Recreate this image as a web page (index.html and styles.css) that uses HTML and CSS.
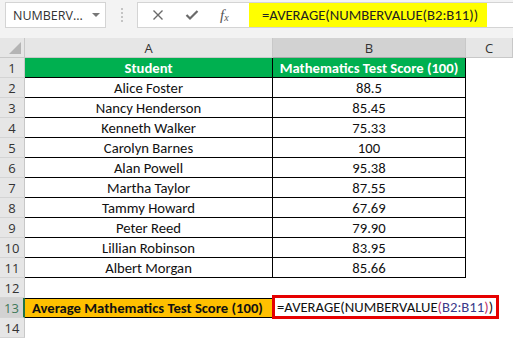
FILE: index.html
```html
<!DOCTYPE html>
<html lang="en">
<head>
  <meta charset="UTF-8">
  <title>NUMBERVALUE average</title>
  <link rel="stylesheet" href="styles.css">
</head>
<body>
  <div class="toolbar">
    <div class="namebox">NUMBERV...<span class="caret"></span></div>
    <div class="grip">
      <svg width="4" height="16" viewBox="0 0 4 16"><circle cx="2" cy="2" r="1" fill="#b5b5b5"/><circle cx="2" cy="6" r="1" fill="#b5b5b5"/><circle cx="2" cy="10" r="1" fill="#b5b5b5"/><circle cx="2" cy="14" r="1" fill="#b5b5b5"/></svg>
    </div>
    <div class="fxbtns">
      <svg width="12" height="12" viewBox="0 0 12 12"><path d="M1.5 1.5 L10.5 10.5 M10.5 1.5 L1.5 10.5" stroke="#6a6a6a" stroke-width="1.4" fill="none"/></svg>
      <svg width="14" height="12" viewBox="0 0 14 12"><path d="M1.5 6 L5 9.5 L12.5 2" stroke="#6a6a6a" stroke-width="2.2" fill="none"/></svg>
      <span class="fx">f<sub>x</sub></span>
    </div>
    <div class="formula"><span class="hl">=AVERAGE(NUMBERVALUE(B2:B11))</span></div>
  </div>

  <div class="sheet">
    <div class="corner"><span class="tri"></span></div>
    <div class="colhead">A</div>
    <div class="colhead sel">B</div>
    <div class="colhead">C</div>

    <div class="rowhead">1</div>
    <div class="cell head">Student</div>
    <div class="cell head right">Mathematics Test Score (100)</div>
    <div class="cell blank"></div>

    <div class="rowhead">2</div>
    <div class="cell">Alice Foster</div>
    <div class="cell right">88.5</div>
    <div class="cell blank"></div>

    <div class="rowhead">3</div>
    <div class="cell">Nancy Henderson</div>
    <div class="cell right">85.45</div>
    <div class="cell blank"></div>

    <div class="rowhead">4</div>
    <div class="cell">Kenneth Walker</div>
    <div class="cell right">75.33</div>
    <div class="cell blank"></div>

    <div class="rowhead">5</div>
    <div class="cell">Carolyn Barnes</div>
    <div class="cell right">100</div>
    <div class="cell blank"></div>

    <div class="rowhead">6</div>
    <div class="cell">Alan Powell</div>
    <div class="cell right">95.38</div>
    <div class="cell blank"></div>

    <div class="rowhead">7</div>
    <div class="cell">Martha Taylor</div>
    <div class="cell right">87.55</div>
    <div class="cell blank"></div>

    <div class="rowhead">8</div>
    <div class="cell">Tammy Howard</div>
    <div class="cell right">67.69</div>
    <div class="cell blank"></div>

    <div class="rowhead">9</div>
    <div class="cell">Peter Reed</div>
    <div class="cell right">79.90</div>
    <div class="cell blank"></div>

    <div class="rowhead">10</div>
    <div class="cell">Lillian Robinson</div>
    <div class="cell right">83.95</div>
    <div class="cell blank"></div>

    <div class="rowhead">11</div>
    <div class="cell">Albert Morgan</div>
    <div class="cell right">85.66</div>
    <div class="cell blank"></div>

    <div class="rowhead">12</div>
    <div class="blank"></div>
    <div class="blank"></div>
    <div class="blank"></div>

    <div class="rowhead sel">13</div>
    <div class="avg">Average Mathematics Test Score (100)</div>
    <div class="edit"><span class="editbox">=AVERAGE(NUMBERVALUE<span class="p1">(</span><span class="ref">B2:B11</span><span class="p1">)</span>)</span></div>
    <div class="blank"></div>

    <div class="rowhead">14</div>
    <div class="blank"></div>
    <div class="blank"></div>
    <div class="blank"></div>
  </div>
</body>
</html>
```

FILE: styles.css
```css
body {
  margin: 0;
  width: 513px;
  height: 338px;
  overflow: hidden;
  background: #fff;
  font-family: Carlito, Lato, sans-serif;
  color: #111;
}

/* formula bar */
.toolbar {
  height: 38px;
  box-sizing: border-box;
  padding-top: 2px;
  background: #f3f3f3;
  display: flex;
  align-items: flex-start;
}
.namebox {
  margin-left: 5px;
  width: 101px;
  height: 26px;
  box-sizing: border-box;
  background: #fff;
  border: 1px solid #d4d4d4;
  display: flex;
  align-items: center;
  padding-left: 7px;
  font-family: "Open Sans", sans-serif;
  font-size: 12.5px;
  color: #333;
}
.caret {
  margin-left: 9px;
  width: 0;
  height: 0;
  border-left: 4px solid transparent;
  border-right: 4px solid transparent;
  border-top: 4px solid #777;
}
.grip {
  width: 31px;
  height: 26px;
  display: flex;
  align-items: center;
  justify-content: center;
}
.fxbtns {
  width: 112px;
  height: 26px;
  box-sizing: border-box;
  background: #fff;
  border: 1px solid #d4d4d4;
  border-right: none;
  display: flex;
  align-items: center;
  justify-content: space-around;
  padding: 0 10px 0 4px;
}
.fx {
  font-family: "Liberation Serif", serif;
  font-style: italic;
  font-size: 15px;
  color: #555;
}
.fx sub {
  font-size: 10px;
  vertical-align: -1px;
}
.formula {
  flex: 1;
  height: 26px;
  box-sizing: border-box;
  background: #fff;
  border-top: 1px solid #d4d4d4;
  border-bottom: 1px solid #d4d4d4;
  display: flex;
}
.hl {
  background: #ffff00;
  width: 238px;
  box-sizing: border-box;
  padding-left: 13px;
  font-size: 14.67px;
  line-height: 25px;
  color: #222;
  white-space: nowrap;
}

/* sheet */
.sheet {
  display: grid;
  grid-template-columns: 25px 248px 193px 47px;
  grid-auto-rows: 20px;
  font-size: 14.67px;
}
.corner {
  background: #e6e6e6;
  border-right: 1px solid #c8c8c8;
  border-bottom: 1px solid #c8c8c8;
  position: relative;
}
.tri {
  position: absolute;
  right: 3px;
  bottom: 3px;
  width: 0;
  height: 0;
  border-left: 12px solid transparent;
  border-bottom: 12px solid #b4b4b4;
}
.colhead {
  background: #e6e6e6;
  border-right: 1px solid #c8c8c8;
  border-bottom: 1px solid #c8c8c8;
  display: flex;
  align-items: center;
  justify-content: center;
  font-family: "Open Sans", sans-serif;
  font-size: 13px;
  color: #333;
}
.colhead.sel {
  background: #d2d2d2;
  border-bottom: 1px solid #a9a9a9;
}
.rowhead {
  background: #e6e6e6;
  border-right: 1px solid #c8c8c8;
  border-bottom: 1px solid #d4d4d4;
  display: flex;
  align-items: center;
  justify-content: center;
  font-family: "Open Sans", sans-serif;
  font-size: 13px;
  color: #333;
}
.rowhead.sel {
  background: #d2d2d2;
  border-right: 2px solid #217346;
  color: #3f7a5a;
}
.cell {
  border-bottom: 1px solid #000;
  border-right: 1px solid #000;
  display: flex;
  align-items: center;
  justify-content: center;
  white-space: nowrap;
}
.cell.blank {
  border: none;
}
.cell.head {
  background: #00b050;
  color: #fff;
  font-weight: bold;
}
.avg {
  background: #ffc000;
  border-top: 1px solid #000;
  border-bottom: 1px solid #000;
  display: flex;
  align-items: center;
  padding-left: 7px;
  font-weight: bold;
  white-space: nowrap;
}
.edit {
  position: relative;
  overflow: visible;
  white-space: nowrap;
}
.editbox {
  position: absolute;
  left: -1px;
  top: -3px;
  height: 24px;
  width: 227px;
  box-sizing: border-box;
  border: 3px solid #e60000;
  background: #fff;
  padding-left: 2px;
  font-size: 14.67px;
  line-height: 18px;
  z-index: 1;
}
.p1 {
  color: #c0306a;
}
.ref {
  color: #3a3a8a;
}
```
